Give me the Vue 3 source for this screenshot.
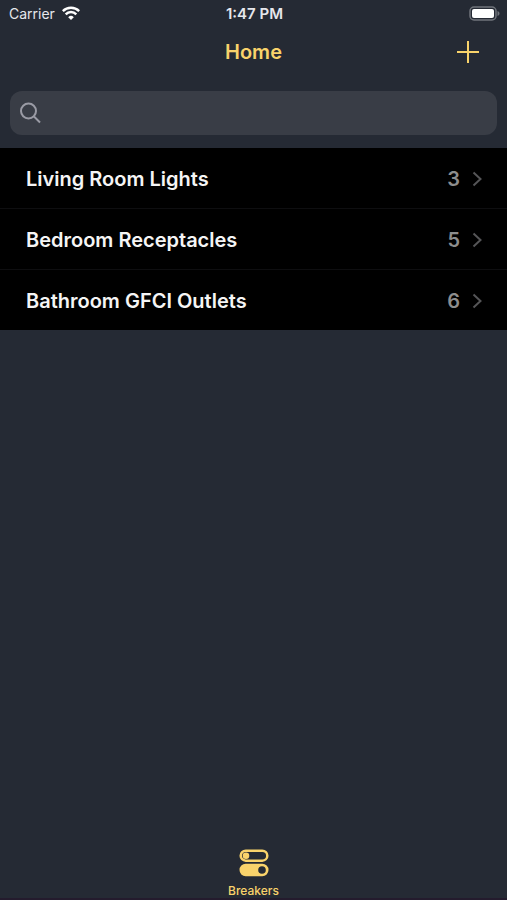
<script setup>
import { ref, computed } from 'vue'

const query = ref('')
const breakers = [
  { name: 'Living Room Lights', count: 3 },
  { name: 'Bedroom Receptacles', count: 5 },
  { name: 'Bathroom GFCI Outlets', count: 6 },
]
const visible = computed(() =>
  breakers.filter((b) => b.name.toLowerCase().includes(query.value.trim().toLowerCase()))
)
</script>

<template>
  <div class="screen">
    <div class="status">
      <div class="carrier">
        <span>Carrier</span>
        <svg class="wifi" viewBox="0 0 18 14" aria-hidden="true">
          <path d="M.8 5.100a11.600 11.600 0 0 1 16.400 0" />
          <path d="M3.700 8.300a7.500 7.500 0 0 1 10.600 0" />
          <path class="dot" d="M9 14 6.200 11.200a4 4 0 0 1 5.600 0Z" />
        </svg>
      </div>
      <span class="time">1:47 PM</span>
      <svg class="battery" viewBox="0 0 31 15" aria-hidden="true">
        <rect class="case" x="1" y="1" width="26" height="13" rx="4" />
        <rect class="charge" x="3" y="3" width="22" height="9" rx="2" />
        <path class="tip" d="M28.500 5v5c1.300-.5 2-1.300 2-2.500s-.7-2-2-2.500Z" />
      </svg>
    </div>

    <header class="nav">
      <h1>Home</h1>
      <button class="add" type="button" aria-label="Add">
        <svg viewBox="0 0 22 22" aria-hidden="true"><path d="M11 0v22M0 11h22" /></svg>
      </button>
    </header>

    <label class="search">
      <svg viewBox="0 0 22 22" aria-hidden="true">
        <circle cx="8.500" cy="9" r="7.500" />
        <path d="m14 14.500 6 6" />
      </svg>
      <input v-model="query" type="search" aria-label="Search" />
    </label>

    <ul class="list">
      <li v-for="b in visible" :key="b.name">
        <a href="#">
          <span class="name">{{ b.name }}</span>
          <span class="count">{{ b.count }}</span>
          <svg viewBox="0 0 10 16" aria-hidden="true"><path d="m1.500 1.500 7 6.500-7 6.500" /></svg>
        </a>
      </li>
    </ul>

    <nav class="tabs">
      <a href="#">
        <svg viewBox="0 0 30 28" aria-hidden="true">
          <rect class="ring" x="1.700" y="1.700" width="26.600" height="10" rx="5" />
          <circle class="fill" cx="7" cy="6.700" r="3.300" />
          <path class="fill" fill-rule="evenodd" d="M6.700 14.800h16.600a6.200 6.200 0 0 1 0 12.400H6.700a6.200 6.200 0 0 1 0-12.400Zm16.300 2.400a3.800 3.800 0 1 0 0 7.600 3.800 3.800 0 0 0 0-7.600Z" />
        </svg>
        <span>Breakers</span>
      </a>
    </nav>
  </div>
</template>

<style>
body {
  margin: 0;
  background: #252a34;
}
</style>

<style scoped>
.screen {
  box-sizing: border-box;
  display: flex;
  flex-direction: column;
  min-height: 100vh;
  border-bottom: 2px solid #241b2d;
  background: #252a34;
  color: #f5f5f5;
  font-family: Inter, "Liberation Sans", sans-serif;
}
svg {
  display: block;
  flex: none;
  fill: none;
}
a {
  color: inherit;
  text-decoration: none;
}
.status {
  box-sizing: border-box;
  display: grid;
  grid-template-columns: 1fr auto 1fr;
  align-items: center;
  height: 28px;
  padding: 0 7px 2px 9px;
  font-size: 14px;
  color: #e6e7ec;
}
.carrier {
  display: flex;
  align-items: center;
  gap: 7px;
}
.wifi {
  width: 18px;
  height: 14px;
  stroke: #fff;
  stroke-width: 2.5;
}
.wifi .dot {
  fill: #fff;
  stroke: none;
}
.time {
  font-size: 15px;
  font-weight: 600;
}
.battery {
  justify-self: end;
  width: 31px;
  height: 15px;
}
.case {
  stroke: #70747b;
  stroke-width: 1.5;
}
.charge {
  fill: #fff;
}
.tip {
  fill: #70747b;
}
.nav {
  display: grid;
  grid-template-columns: 1fr auto 1fr;
  align-items: center;
  height: 48px;
  padding: 0 28px;
  color: #f9d36b;
}
.nav h1 {
  grid-column: 2;
  margin: 0;
  font-size: 20px;
  font-weight: 600;
}
.add {
  justify-self: end;
  padding: 0;
  border: 0;
  background: none;
  color: inherit;
}
.add svg {
  width: 22px;
  height: 22px;
  stroke: currentColor;
  stroke-width: 2;
}
.search {
  display: flex;
  align-items: center;
  gap: 8px;
  height: 44px;
  margin: 15px 10px 13px;
  padding: 0 10px;
  border-radius: 12px;
  background: #393d46;
}
.search svg {
  width: 22px;
  height: 22px;
  stroke: #9a9ba5;
  stroke-width: 2;
}
.search input {
  flex: 1;
  min-width: 0;
  padding: 0;
  border: 0;
  outline: 0;
  background: none;
  color: inherit;
  font: inherit;
  font-size: 20px;
}
.list {
  margin: 0;
  padding: 0;
  background: #000;
  list-style: none;
}
.list li + li {
  border-top: 1px solid #0e0e10;
}
.list a {
  box-sizing: border-box;
  display: flex;
  align-items: center;
  height: 60px;
  padding: 1px 25px 0 26px;
  font-size: 20px;
  font-weight: 600;
}
.name {
  flex: 1;
}
.count {
  margin-right: 12px;
  color: #8d8d8d;
}
.list svg {
  width: 10px;
  height: 16px;
  stroke: #555557;
  stroke-width: 2;
}
.tabs {
  display: flex;
  justify-content: center;
  margin-top: auto;
  color: #f9d36b;
}
.tabs a {
  display: flex;
  flex-direction: column;
  align-items: center;
  gap: 7px;
  font-size: 12px;
  font-weight: 500;
  line-height: 14px;
}
.tabs svg {
  width: 30px;
  height: 28px;
}
.ring {
  stroke: currentColor;
  stroke-width: 2.5;
}
.fill {
  fill: currentColor;
}
</style>
